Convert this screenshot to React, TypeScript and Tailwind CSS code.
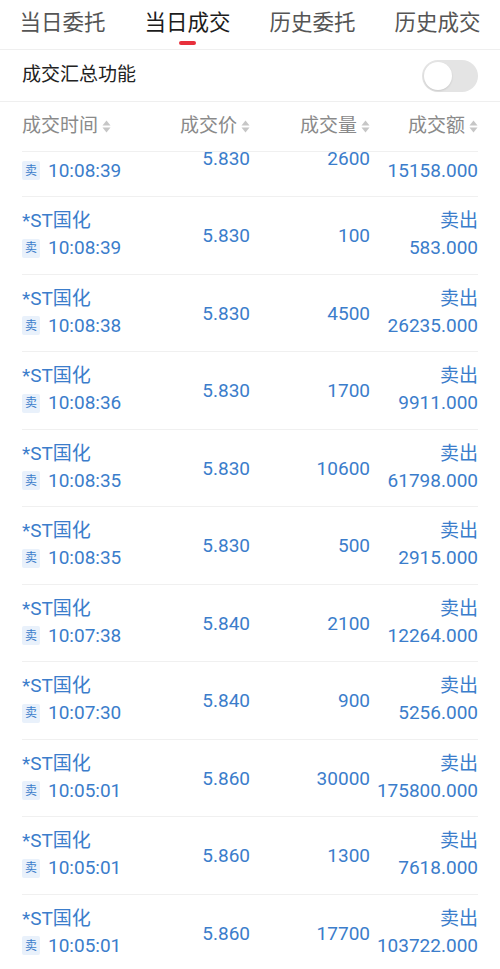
import React from "react";

const rows = [
  { time: "10:08:39", price: "5.830", vol: "2600", amt: "15158.000" },
  { time: "10:08:39", price: "5.830", vol: "100", amt: "583.000" },
  { time: "10:08:38", price: "5.830", vol: "4500", amt: "26235.000" },
  { time: "10:08:36", price: "5.830", vol: "1700", amt: "9911.000" },
  { time: "10:08:35", price: "5.830", vol: "10600", amt: "61798.000" },
  { time: "10:08:35", price: "5.830", vol: "500", amt: "2915.000" },
  { time: "10:07:38", price: "5.840", vol: "2100", amt: "12264.000" },
  { time: "10:07:30", price: "5.840", vol: "900", amt: "5256.000" },
  { time: "10:05:01", price: "5.860", vol: "30000", amt: "175800.000" },
  { time: "10:05:01", price: "5.860", vol: "1300", amt: "7618.000" },
  { time: "10:05:01", price: "5.860", vol: "17700", amt: "103722.000" },
];

function SortIcon() {
  return (
    <svg width="9" height="15" viewBox="0 0 9 15" className="ml-[4px] shrink-0">
      <path d="M0.5 6.5 L4.5 1.5 L8.5 6.5 Z" fill="#c6c6c6" />
      <path d="M0.5 8.5 L4.5 13.5 L8.5 8.5 Z" fill="#c6c6c6" />
    </svg>
  );
}

const tabs = ["当日委托", "当日成交", "历史委托", "历史成交"];

export default function App() {
  return (
    <div
      className="w-[500px] h-[969px] overflow-hidden bg-white flex flex-col"
      style={{ fontFamily: "Roboto, 'Noto Sans CJK SC', 'Noto Sans', sans-serif" }}
    >
      {/* Tabs */}
      <div className="h-[50px] shrink-0 flex border-b border-[#efefef]">
        {tabs.map((t, i) => (
          <div key={t} className="flex-1 flex flex-col items-center relative">
            <span
              className={`mt-[9px] leading-[28px] text-[21.5px] ${
                i === 1 ? "text-[#1c1c1c]" : "text-[#555555]"
              }`}
            >
              {t}
            </span>
            {i === 1 && (
              <div className="absolute top-[41px] w-[17px] h-[3.5px] rounded-full bg-[#e8303c]" />
            )}
          </div>
        ))}
      </div>

      {/* Summary toggle row */}
      <div className="h-[52px] shrink-0 flex items-center justify-between px-[22px] border-b border-[#efefef]">
        <span className="text-[19px] text-[#222222]">成交汇总功能</span>
        <div className="w-[56px] h-[32px] rounded-full bg-[#e4e4e4] p-[2px] flex items-center">
          <div className="w-[28px] h-[28px] rounded-full bg-white shadow-[0_1px_2px_rgba(0,0,0,0.12)]" />
        </div>
      </div>

      {/* Column header */}
      <div className="h-[50px] shrink-0 mx-[22px] border-b border-[#f0f0f0] grid grid-cols-[128px_100px_120px_108px] items-center text-[19px] text-[#8a8a8a]">
        <div className="flex items-center">
          <span>成交时间</span>
          <SortIcon />
        </div>
        <div className="flex items-center justify-end">
          <span>成交价</span>
          <SortIcon />
        </div>
        <div className="flex items-center justify-end">
          <span>成交量</span>
          <SortIcon />
        </div>
        <div className="flex items-center justify-end">
          <span>成交额</span>
          <SortIcon />
        </div>
      </div>

      {/* List */}
      <div className="flex-1 overflow-hidden">
        {rows.map((r, i) => (
          <div
            key={i}
            className={`h-[77.5px] mx-[22px] border-b border-[#f0f0f0] grid grid-cols-[128px_100px_120px_108px] text-[#3b7dcb] ${
              i === 0 ? "mt-[-32.5px]" : ""
            }`}
          >
            <div className="flex flex-col pt-[11px]">
              <span className="text-[19px] leading-[26px]">*ST国化</span>
              <div className="mt-[1px] h-[26px] flex items-center">
                <span className="w-[18px] h-[19px] flex items-center justify-center bg-[#e9f1fb] text-[12px] leading-none text-[#3b7dcb] rounded-[2px]">
                  卖
                </span>
                <span className="ml-[8px] text-[19px] leading-[26px]">{r.time}</span>
              </div>
            </div>
            <div className="flex items-center justify-end pt-[2px] text-[19px]">{r.price}</div>
            <div className="flex items-center justify-end pt-[2px] text-[19px]">{r.vol}</div>
            <div className="flex flex-col items-end pt-[11px] text-[19px]">
              <span className="leading-[26px]">卖出</span>
              <span className="mt-[1px] leading-[26px]">{r.amt}</span>
            </div>
          </div>
        ))}
      </div>
    </div>
  );
}
